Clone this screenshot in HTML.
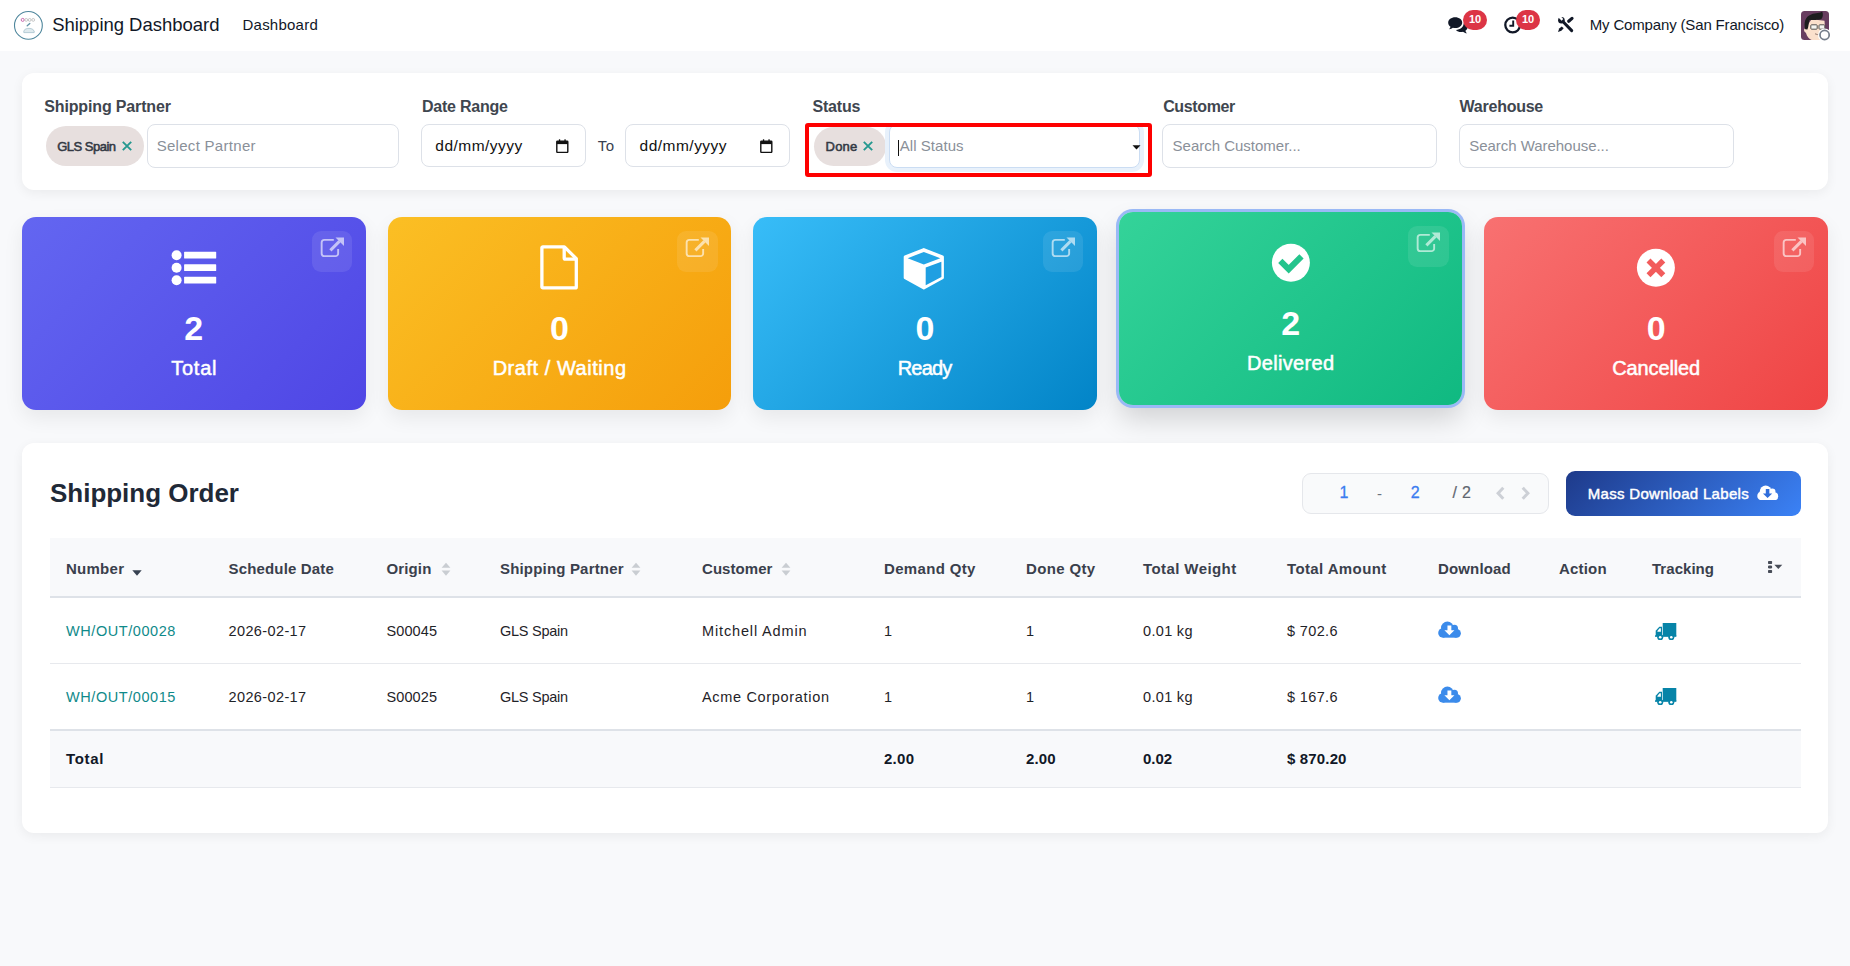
<!DOCTYPE html>
<html lang="en">
<head>
<meta charset="utf-8">
<title>Shipping Dashboard</title>
<style>
*{box-sizing:border-box;margin:0;padding:0}
html,body{width:1850px;height:966px;overflow:hidden}
body{background:#f8f9fb;font-family:"Liberation Sans",sans-serif;color:#111827;position:relative}
.t{position:absolute;white-space:nowrap;line-height:1}
.abs{position:absolute}
nav{position:absolute;left:0;top:0;width:1850px;height:51px;background:#fff}
.panel{position:absolute;background:#fff;border-radius:12px;box-shadow:0 3px 12px rgba(0,0,0,.06)}
.inp{position:absolute;background:#fff;border:1px solid #dde1e8;border-radius:8px}
.tag{position:absolute;background:#e7dfde;border-radius:20px}
.card{position:absolute;border-radius:14px;box-shadow:0 8px 20px rgba(0,0,0,.07)}
.ext{position:absolute;right:13.500px;top:14px;width:40.500px;height:40.500px;border-radius:9px;background:rgba(255,255,255,.09)}
.badge{position:absolute;background:#dc3545;border-radius:10px;color:#fff;font-weight:700;font-size:11px;line-height:19.500px;text-align:center;height:19.500px;width:24.500px}
table{position:absolute;left:50px;top:538px;width:1751px;border-collapse:separate;border-spacing:0;table-layout:fixed;font-size:15px}
th,td{text-align:left;padding:0 0 0 16px;vertical-align:middle;white-space:nowrap;position:relative}
thead th{height:60px;background:#f8f9fb;border-bottom:2px solid #dee2e8;color:#3a404c;font-weight:700;padding-top:2.500px}
tbody td{height:65.500px;border-bottom:1px solid #e7e9ed;color:#1f2328;padding-top:.8px;font-size:14.500px}
tbody tr:last-child td{height:65.500px;border-bottom:0}
tfoot td{height:59px;background:#f8f9fb;border-top:2px solid #dee2e8;border-bottom:1px solid #e7e9ed;font-weight:700;color:#111827;padding-bottom:1px}
a.lnk{color:#0f8a8a;text-decoration:none}
</style>
</head>
<body>

<nav>
<svg class="abs" style="left:13px;top:10px" width="31" height="31" viewBox="0 0 31 31">
<circle cx="15.4" cy="15.4" r="13.9" fill="#fff" stroke="#4e869c" stroke-width="1.1"/>
<circle cx="9.7" cy="9.9" r="1.5" fill="none" stroke="#c55aa6" stroke-width=".9"/>
<circle cx="13.2" cy="9.9" r="1.4" fill="none" stroke="#b9b9b9" stroke-width=".8"/>
<circle cx="16.7" cy="9.9" r="1.4" fill="none" stroke="#b9b9b9" stroke-width=".8"/>
<circle cx="20.2" cy="9.9" r="1.4" fill="none" stroke="#b9b9b9" stroke-width=".8"/>
<path d="M14.2 15.8 L16.8 13.4" stroke="#5f93a6" stroke-width="1.3" stroke-linecap="round"/>
<path d="M10.8 21 q1-2.6 4-2.6 h2.2 q3 0 4.2 2.8 v1.4 h-10.4z" fill="#dfeaee" stroke="#9dbcc8" stroke-width=".7"/>
</svg>
<span class="t" style="left:52.20px;top:16.44px;font-size:18.5px;letter-spacing:-0.024px;color:#111827;">Shipping Dashboard</span>
<span class="t" style="left:242.50px;top:17.20px;font-size:15px;letter-spacing:0.231px;color:#111827;">Dashboard</span>
<svg class="abs" style="left:1448px;top:16.5px" width="20" height="17.5" viewBox="0 0 20 17.5">
<path d="M7.2 0.3C3.3 0.3 0.2 2.7 0.2 5.7c0 1.6.9 3 2.3 4-.2 1-.8 1.9-1.6 2.5 1.6 0 3-.6 4-1.4.7.2 1.5.3 2.3.3 3.9 0 7-2.4 7-5.4S11.100 .3 7.200 .3z" fill="#111827"/>
<path d="M15.6 6.6c.1 3.600-3.500 6.200-7.600 6.300 1.100 1.300 3.100 2.100 5.100 2.100.700 0 1.300-.1 1.900-.2 1 .9 2.400 1.500 4 1.500-.8-.6-1.400-1.500-1.600-2.500 1.400-.9 2.300-2.200 2.300-3.700 0-1.500-1.600-2.900-4.100-3.500z" fill="#111827"/>
</svg>
<div class="badge" style="left:1462.8px;top:10.2px">10</div>
<svg class="abs" style="left:1504px;top:15.5px" width="18" height="18" viewBox="0 0 18 18">
<circle cx="8.700" cy="9" r="7.400" fill="none" stroke="#111827" stroke-width="2.300"/>
<path d="M9.2 4.600v5.200H5.400" fill="none" stroke="#111827" stroke-width="1.9"/>
</svg>
<div class="badge" style="left:1515.8px;top:10.2px">10</div>
<svg class="abs" style="left:1556px;top:15px" width="20" height="19" viewBox="0 0 20 19">
<g fill="#111827" stroke="#111827">
<path d="M7.600 7.200L15.700 15.600" stroke-width="3" stroke-linecap="round" fill="none"/>
<circle cx="5.400" cy="5.200" r="3.300" stroke="none"/>
<path d="M12.700 6.300L16 3.400" stroke-width="3.200" stroke-linecap="round" fill="none"/>
<path d="M2 16.900L3.200 13.600 5.800 11.400 7.700 13.200 5.400 15.800z" stroke="none"/>
</g>
<path d="M5.600 5.700L1.600 1.700 3.400 0 7.300 3.900z" fill="#fff"/>
</svg>
<span class="t" style="left:1589.70px;top:16.70px;font-size:15px;letter-spacing:-0.155px;color:#111827;">My Company (San Francisco)</span>
<svg class="abs" style="left:1801px;top:11px" width="32" height="32" viewBox="0 0 32 32">
<defs><clipPath id="av"><rect x="0" y="0" width="28" height="29" rx="3.5"/></clipPath></defs>
<g clip-path="url(#av)">
<rect width="28" height="29" fill="#683d60"/>
<path d="M4.500 17.500c-1.800-.8-2.200 3.500.4 4.200 1.400 4.800 4.200 7.600 7.600 7.600h6.500c3.200-1.600 5.200-5.600 5-11.600l-.5-8-13-1.500z" fill="#fbe0cc"/>
<path d="M4.200 18.200c-1.500-6.500-.3-12.500 6-14.800 4.500-1.600 9-1 11-2.800 1.200 2.600.8 5.800-.8 7.400-3.600 1.600-8.600.4-12 1.200-.9 2.700-.6 6.500-2 9.300z" fill="#1d1d1f"/>
<rect x="9.800" y="13.800" width="6.400" height="4.400" rx=".8" fill="#f4f4f0" stroke="#55524f" stroke-width="1"/>
<rect x="18" y="13.800" width="5.800" height="4.400" rx=".8" fill="#f4f4f0" stroke="#55524f" stroke-width="1"/>
<path d="M14 22.800q2.500 1.500 5.500.2" stroke="#8a6f66" stroke-width=".9" fill="none"/>
</g>
<circle cx="23.600" cy="24" r="6.600" fill="#fff"/>
<circle cx="23.600" cy="24" r="4.600" fill="#fff" stroke="#747d8a" stroke-width="1.700"/>
</svg>
</nav>
<section class="panel" style="left:22px;top:73px;width:1806px;height:117px"></section>
<span class="t" style="left:44.30px;top:99.16px;font-size:16px;letter-spacing:-0.152px;color:#40464f;font-weight:700;">Shipping Partner</span>
<span class="t" style="left:421.90px;top:99.16px;font-size:16px;letter-spacing:-0.211px;color:#40464f;font-weight:700;">Date Range</span>
<span class="t" style="left:812.40px;top:99.16px;font-size:16px;letter-spacing:-0.176px;color:#40464f;font-weight:700;">Status</span>
<span class="t" style="left:1163.20px;top:99.16px;font-size:16px;letter-spacing:-0.374px;color:#40464f;font-weight:700;">Customer</span>
<span class="t" style="left:1459.60px;top:99.16px;font-size:16px;letter-spacing:-0.248px;color:#40464f;font-weight:700;">Warehouse</span>
<div class="tag" style="left:46px;top:126px;width:98px;height:40px"></div>
<span class="t" style="left:57.20px;top:140.20px;font-size:13px;letter-spacing:-0.507px;color:#333944;-webkit-text-stroke:0.55px #333944;">GLS Spain</span>
<svg class="abs" style="left:122px;top:141.200px" width="10" height="10" viewBox="0 0 10 10"><path d="M.8.800l8.400 8.400M9.200.800L.8 9.200" stroke="#25988f" stroke-width="1.900" fill="none"/></svg>
<div class="inp" style="left:147px;top:124px;width:252px;height:43.500px"></div>
<span class="t" style="left:156.70px;top:137.60px;font-size:15px;letter-spacing:0.290px;color:#8a9099;">Select Partner</span>
<div class="inp" style="left:421px;top:124px;width:165px;height:43px"></div>
<span class="t" style="left:435.30px;top:137.98px;font-size:15.5px;letter-spacing:0.479px;color:#111;">dd/mm/yyyy</span>
<svg class="abs" style="left:555.8px;top:138.500px" width="13" height="14.500" viewBox="0 0 13 14.500"><rect x=".8" y="2.100" width="11" height="11.300" rx=".7" fill="#fff" stroke="#111" stroke-width="1.400"/><rect x=".8" y="2.100" width="11" height="3" fill="#111"/><rect x="2.900" y=".3" width="1.300" height="2.500" fill="#111"/><rect x="8.400" y=".3" width="1.300" height="2.500" fill="#111"/></svg>
<span class="t" style="left:597.80px;top:138.30px;font-size:15px;letter-spacing:0.375px;color:#374151;">To</span>
<div class="inp" style="left:625.300px;top:124px;width:164.700px;height:43px"></div>
<span class="t" style="left:639.60px;top:137.98px;font-size:15.5px;letter-spacing:0.479px;color:#111;">dd/mm/yyyy</span>
<svg class="abs" style="left:760.1px;top:138.500px" width="13" height="14.500" viewBox="0 0 13 14.500"><rect x=".8" y="2.100" width="11" height="11.300" rx=".7" fill="#fff" stroke="#111" stroke-width="1.400"/><rect x=".8" y="2.100" width="11" height="3" fill="#111"/><rect x="2.900" y=".3" width="1.300" height="2.500" fill="#111"/><rect x="8.400" y=".3" width="1.300" height="2.500" fill="#111"/></svg>
<div class="tag" style="left:814.200px;top:127px;width:71.600px;height:39px"></div>
<span class="t" style="left:825.60px;top:140.20px;font-size:13px;letter-spacing:0.177px;color:#333944;-webkit-text-stroke:0.55px #333944;">Done</span>
<svg class="abs" style="left:863.4px;top:141.200px" width="10" height="10" viewBox="0 0 10 10"><path d="M.8.800l8.400 8.400M9.200.800L.8 9.200" stroke="#25988f" stroke-width="1.900" fill="none"/></svg>
<div class="inp" style="left:888.800px;top:124px;width:251px;height:43.500px;border-color:#cbddf3;box-shadow:0 0 0 4px #e8f1fb;clip-path:inset(2px -5px -5px -5px)"></div>
<div class="abs" style="left:898.300px;top:139.500px;width:1.200px;height:16px;background:#111"></div>
<span class="t" style="left:899.80px;top:137.90px;font-size:15px;letter-spacing:0.047px;color:#8a9099;">All Status</span>
<svg class="abs" style="left:1132px;top:144.500px" width="9" height="5" viewBox="0 0 9 5"><path d="M.5.300h8L4.500 4.600z" fill="#111"/></svg>
<div class="abs" style="left:804.600px;top:122.800px;width:347.800px;height:54.700px;border:4.300px solid #fe0000;border-radius:3px"></div>
<div class="inp" style="left:1162.300px;top:124px;width:274.500px;height:43.600px"></div>
<span class="t" style="left:1172.60px;top:138.00px;font-size:15px;letter-spacing:-0.012px;color:#8a9099;">Search Customer...</span>
<div class="inp" style="left:1458.900px;top:124px;width:274.700px;height:43.600px"></div>
<span class="t" style="left:1469.20px;top:138.00px;font-size:15px;letter-spacing:-0.035px;color:#8a9099;">Search Warehouse...</span>
<div class="card" style="left:22px;top:217px;width:343.600px;height:192.500px;background:linear-gradient(135deg,#6366f1,#4f46e5);">
<svg class="abs" style="left:149px;top:32.500px" width="46" height="36" viewBox="0 0 46 36"><g fill="#fff"><circle cx="5.600" cy="5.200" r="5"/><circle cx="5.600" cy="17.700" r="5"/><circle cx="5.600" cy="30.200" r="5"/><rect x="13.100" y="1.800" width="32.100" height="6.800" rx=".6"/><rect x="13.100" y="14.300" width="32.100" height="6.800" rx=".6"/><rect x="13.100" y="26.800" width="32.100" height="6.800" rx=".6"/></g></svg>
<div class="ext"><svg class="abs" style="left:0;top:0" width="40" height="40" viewBox="0 0 40 40"><g stroke="#fff" stroke-opacity=".62" fill="none"><path d="M21.800 8.850H12.400a2.750 2.750 0 0 0-2.750 2.750v10.800a2.750 2.750 0 0 0 2.750 2.750h11a2.750 2.750 0 0 0 2.750-2.750V17.900" stroke-width="1.900"/><path d="M18.400 19.400L27.400 10.400" stroke-width="3"/></g><path d="M23.500 6.500h8.500v8.500z" fill="#fff" fill-opacity=".62"/></svg></div>
<span class="t" style="left:162.37px;top:94.42px;font-size:34px;letter-spacing:0.000px;color:#fff;font-weight:700;">2</span>
<span class="t" style="left:149.15px;top:140.67px;font-size:20px;letter-spacing:0.775px;color:#fff;-webkit-text-stroke:0.5px #fff;">Total</span>
</div>
<div class="card" style="left:387.6px;top:217px;width:343.600px;height:192.500px;background:linear-gradient(135deg,#fbbf24,#f59e0b);">
<svg class="abs" style="left:151.400px;top:27px" width="42" height="47" viewBox="0 0 42 47"><path d="M3.900 2.800h21.500l11.900 11.900v28.200a1 1 0 0 1-1 1H3.900a1 1 0 0 1-1-1V3.800a1 1 0 0 1 1-1z" fill="none" stroke="#fff" stroke-width="3.300" stroke-linejoin="round"/><path d="M25.200 2.800v11.200a1.200 1.200 0 0 0 1.200 1.200h10.900" fill="none" stroke="#fff" stroke-width="3.300"/></svg>
<div class="ext"><svg class="abs" style="left:0;top:0" width="40" height="40" viewBox="0 0 40 40"><g stroke="#fff" stroke-opacity=".62" fill="none"><path d="M21.800 8.850H12.400a2.750 2.750 0 0 0-2.750 2.750v10.800a2.750 2.750 0 0 0 2.750 2.750h11a2.750 2.750 0 0 0 2.750-2.750V17.900" stroke-width="1.900"/><path d="M18.400 19.400L27.400 10.400" stroke-width="3"/></g><path d="M23.500 6.500h8.500v8.500z" fill="#fff" fill-opacity=".62"/></svg></div>
<span class="t" style="left:162.37px;top:94.42px;font-size:34px;letter-spacing:0.000px;color:#fff;font-weight:700;">0</span>
<span class="t" style="left:105.05px;top:140.67px;font-size:20px;letter-spacing:0.536px;color:#fff;-webkit-text-stroke:0.5px #fff;">Draft / Waiting</span>
</div>
<div class="card" style="left:753.2px;top:217px;width:343.600px;height:192.500px;background:linear-gradient(135deg,#38bdf8,#0284c7);">
<svg class="abs" style="left:149px;top:30px" width="44" height="44" viewBox="0 0 44 44"><path d="M21.800 2.600L40.400 10v20.800L21.800 41 3.200 30.800V10z" fill="#fff" stroke="#fff" stroke-width="3" stroke-linejoin="round"/><path d="M21.800 4.900l16.500 6.300-16.500 6.200L5.700 11.200z" fill="#24a5e6"/><path d="M23.700 20.500l15.700-5.800v15.200L23.700 38.300z" fill="#1f9fe2"/></svg>
<div class="ext"><svg class="abs" style="left:0;top:0" width="40" height="40" viewBox="0 0 40 40"><g stroke="#fff" stroke-opacity=".62" fill="none"><path d="M21.800 8.850H12.400a2.750 2.750 0 0 0-2.750 2.750v10.800a2.750 2.750 0 0 0 2.750 2.750h11a2.750 2.750 0 0 0 2.750-2.750V17.900" stroke-width="1.900"/><path d="M18.400 19.400L27.400 10.400" stroke-width="3"/></g><path d="M23.500 6.500h8.500v8.500z" fill="#fff" fill-opacity=".62"/></svg></div>
<span class="t" style="left:162.37px;top:94.42px;font-size:34px;letter-spacing:0.000px;color:#fff;font-weight:700;">0</span>
<span class="t" style="left:144.50px;top:140.67px;font-size:20px;letter-spacing:-0.800px;color:#fff;-webkit-text-stroke:0.5px #fff;">Ready</span>
</div>
<div class="card" style="left:1118.8px;top:212px;width:343.600px;height:192.500px;background:linear-gradient(135deg,#34d399,#10b981);box-shadow:0 0 0 3px #9ab9f6,0 14px 28px rgba(0,0,0,.16);">
<svg class="abs" style="left:152px;top:30.500px" width="40" height="40" viewBox="0 0 40 40"><circle cx="19.900" cy="19.800" r="19" fill="#fff"/><path d="M9.300 17.800L17.700 26.200 30.500 13.400" fill="none" stroke="#24c48c" stroke-width="6"/></svg>
<div class="ext"><svg class="abs" style="left:0;top:0" width="40" height="40" viewBox="0 0 40 40"><g stroke="#fff" stroke-opacity=".62" fill="none"><path d="M21.800 8.850H12.400a2.750 2.750 0 0 0-2.750 2.750v10.800a2.750 2.750 0 0 0 2.750 2.750h11a2.750 2.750 0 0 0 2.750-2.750V17.900" stroke-width="1.900"/><path d="M18.400 19.400L27.400 10.400" stroke-width="3"/></g><path d="M23.500 6.500h8.500v8.500z" fill="#fff" fill-opacity=".62"/></svg></div>
<span class="t" style="left:162.37px;top:94.42px;font-size:34px;letter-spacing:0.000px;color:#fff;font-weight:700;">2</span>
<span class="t" style="left:128.30px;top:140.67px;font-size:20px;letter-spacing:0.312px;color:#fff;-webkit-text-stroke:0.5px #fff;">Delivered</span>
</div>
<div class="card" style="left:1484.4px;top:217px;width:343.600px;height:192.500px;background:linear-gradient(135deg,#f87171,#ef4444);">
<svg class="abs" style="left:152px;top:30.500px" width="40" height="40" viewBox="0 0 40 40"><circle cx="19.900" cy="19.800" r="19" fill="#fff"/><path d="M12.500 12.400l14.800 14.800M27.300 12.400L12.500 27.200" fill="none" stroke="#f25c5c" stroke-width="5.600"/></svg>
<div class="ext"><svg class="abs" style="left:0;top:0" width="40" height="40" viewBox="0 0 40 40"><g stroke="#fff" stroke-opacity=".62" fill="none"><path d="M21.800 8.850H12.400a2.750 2.750 0 0 0-2.750 2.750v10.800a2.750 2.750 0 0 0 2.750 2.750h11a2.750 2.750 0 0 0 2.750-2.750V17.900" stroke-width="1.900"/><path d="M18.400 19.400L27.400 10.400" stroke-width="3"/></g><path d="M23.500 6.500h8.500v8.500z" fill="#fff" fill-opacity=".62"/></svg></div>
<span class="t" style="left:162.37px;top:94.42px;font-size:34px;letter-spacing:0.000px;color:#fff;font-weight:700;">0</span>
<span class="t" style="left:127.80px;top:140.67px;font-size:20px;letter-spacing:-0.113px;color:#fff;-webkit-text-stroke:0.5px #fff;">Cancelled</span>
</div>
<section class="panel" style="left:22px;top:443px;width:1806px;height:390px"></section>
<span class="t" style="left:50.00px;top:480.49px;font-size:26px;letter-spacing:-0.022px;color:#1f2937;font-weight:700;">Shipping Order</span>
<div class="abs" style="left:1302px;top:473px;width:246.500px;height:41px;background:#f9fafb;border:1px solid #e5e7eb;border-radius:9px"></div>
<span class="t" style="left:1339.60px;top:485.26px;font-size:16px;letter-spacing:0.000px;color:#3b7cf0;-webkit-text-stroke:0.3px #3b7cf0;">1</span>
<span class="t" style="left:1377.00px;top:486.10px;font-size:15px;letter-spacing:0.000px;color:#6b7280;">-</span>
<span class="t" style="left:1410.80px;top:485.26px;font-size:16px;letter-spacing:0.000px;color:#3b7cf0;-webkit-text-stroke:0.3px #3b7cf0;">2</span>
<span class="t" style="left:1452.60px;top:485.26px;font-size:16px;letter-spacing:0.320px;color:#5f6670;-webkit-text-stroke:0.2px #5f6670;">/ 2</span>
<svg class="abs" style="left:1495px;top:486px" width="12" height="15" viewBox="0 0 12 15"><path d="M8.300 1.700L3.100 7.200l5.200 5.500" fill="none" stroke="#cdd0d6" stroke-width="3"/></svg>
<svg class="abs" style="left:1519.500px;top:486px" width="12" height="15" viewBox="0 0 12 15"><path d="M2.700 1.700l5.200 5.500-5.200 5.500" fill="none" stroke="#cdd0d6" stroke-width="3"/></svg>
<div class="abs" style="left:1566px;top:471px;width:235px;height:44.500px;border-radius:9px;background:linear-gradient(135deg,#1e3a8a,#3b82f6)"></div>
<span class="t" style="left:1587.70px;top:485.60px;font-size:15px;letter-spacing:0.311px;color:#fff;-webkit-text-stroke:0.45px #fff;">Mass Download Labels</span>
<svg class="abs" style="left:1757.4px;top:484.7px" width="21.5" height="15.6" viewBox="0 0 24 17.500"><g fill="#fff"><circle cx="9.700" cy="7.100" r="6.600"/><circle cx="5.100" cy="12.300" r="4.900"/><circle cx="19.200" cy="12.700" r="4.500"/><circle cx="17" cy="7.500" r="3.700"/><rect x="5.100" y="9" width="14.100" height="8.200"/></g><path d="M9.800 4.600h4v4.800h3.200l-5.200 5.300-5.200-5.300h3.200z" fill="#2f6ddb"/></svg>
<table><colgroup><col style="width:162.5px"><col style="width:158px"><col style="width:113.5px"><col style="width:202px"><col style="width:182px"><col style="width:142px"><col style="width:117px"><col style="width:144px"><col style="width:151px"><col style="width:121px"><col style="width:93px"><col style="width:116px"><col style="width:49px"></colgroup>
<thead><tr>
<th><span style="letter-spacing:0.260px">Number</span><svg style="position:absolute;left:81.800px;top:31.500px" width="10" height="6" viewBox="0 0 10 6"><path d="M.3.300h9.400L5 5.700z" fill="#374151"/></svg></th>
<th><span style="letter-spacing:0.163px">Schedule Date</span></th>
<th><span style="letter-spacing:0.125px">Origin</span><svg style="position:absolute;left:70px;top:23.900px" width="10" height="14.300" viewBox="0 0 10 13" preserveAspectRatio="none"><path d="M.6 5.300L5 .6l4.400 4.700zM.6 7.700L5 12.400l4.400-4.700z" fill="#c9cdd2"/></svg></th>
<th><span style="letter-spacing:0.178px">Shipping Partner</span><svg style="position:absolute;left:147.2px;top:23.900px" width="10" height="14.300" viewBox="0 0 10 13" preserveAspectRatio="none"><path d="M.6 5.300L5 .6l4.400 4.700zM.6 7.700L5 12.400l4.400-4.700z" fill="#c9cdd2"/></svg></th>
<th><span style="letter-spacing:0.050px">Customer</span><svg style="position:absolute;left:94.6px;top:23.900px" width="10" height="14.300" viewBox="0 0 10 13" preserveAspectRatio="none"><path d="M.6 5.300L5 .6l4.400 4.700zM.6 7.700L5 12.400l4.400-4.700z" fill="#c9cdd2"/></svg></th>
<th><span style="letter-spacing:0.328px">Demand Qty</span></th>
<th><span style="letter-spacing:0.361px">Done Qty</span></th>
<th><span style="letter-spacing:0.411px">Total Weight</span></th>
<th><span style="letter-spacing:0.386px">Total Amount</span></th>
<th><span style="letter-spacing:0.154px">Download</span></th>
<th><span style="letter-spacing:0.190px">Action</span></th>
<th><span style="letter-spacing:0.039px">Tracking</span></th>
<th><svg style="position:absolute;left:15.200px;top:23px" width="17" height="13" viewBox="0 0 17 13"><g fill="#484d58"><rect x="1" y="0" width="4.100" height="3" rx=".7"/><rect x="1" y="4.400" width="4.100" height="3.100" rx="1.200"/><rect x="1" y="9" width="4.100" height="3" rx=".7"/><path d="M7.300 3.800h8l-4 4.100z"/></g></svg></th>
</tr></thead><tbody>
<tr>
<td><a class="lnk" style="letter-spacing:0.567px">WH/OUT/00028</a></td>
<td><span style="letter-spacing:0.381px">2026-02-17</span></td>
<td><span style="letter-spacing:0.095px">S00045</span></td>
<td><span style="letter-spacing:-0.263px">GLS Spain</span></td>
<td><span style="letter-spacing:0.850px">Mitchell Admin</span></td>
<td>1</td><td>1</td>
<td><span style="letter-spacing:0.323px">0.01 kg</span></td>
<td><span style="letter-spacing:0.357px">$ 702.6</span></td>
<td><svg class="abs" style="left:15.7px;top:23.3px" width="23.2" height="17" viewBox="0 0 24 17.500"><g fill="#3b8beb"><circle cx="9.700" cy="7.100" r="6.600"/><circle cx="5.100" cy="12.300" r="4.900"/><circle cx="19.200" cy="12.700" r="4.500"/><circle cx="17" cy="7.500" r="3.700"/><rect x="5.100" y="9" width="14.100" height="8.200"/></g><path d="M9.800 4.600h4v4.800h3.200l-5.200 5.300-5.200-5.300h3.200z" fill="#fff"/></svg></td><td></td>
<td><svg style="position:absolute;left:19px;top:24.7px" width="22" height="17.500" viewBox="0 0 22 17.500"><g fill="#0784a8"><path d="M7.700 0h13.600v13.200H7.700z"/><path d="M7 3.700H4.300L.7 7.800v5.400H7z"/><path d="M0 12.300h21.300v1.500H0z"/><circle cx="5.200" cy="14.300" r="3"/><circle cx="16.300" cy="14.300" r="3"/></g><path d="M5.900 5.300H4.600L2.400 7.900v.8h3.500z" fill="#fff"/><circle cx="5.200" cy="14.300" r="1.300" fill="#fff"/><circle cx="16.300" cy="14.300" r="1.300" fill="#fff"/></svg></td><td></td>
</tr>
<tr>
<td><a class="lnk" style="letter-spacing:0.567px">WH/OUT/00015</a></td>
<td><span style="letter-spacing:0.381px">2026-02-17</span></td>
<td><span style="letter-spacing:0.095px">S00025</span></td>
<td><span style="letter-spacing:-0.263px">GLS Spain</span></td>
<td><span style="letter-spacing:0.675px">Acme Corporation</span></td>
<td>1</td><td>1</td>
<td><span style="letter-spacing:0.323px">0.01 kg</span></td>
<td><span style="letter-spacing:0.357px">$ 167.6</span></td>
<td><svg class="abs" style="left:15.7px;top:22.7px" width="23.2" height="17" viewBox="0 0 24 17.500"><g fill="#3b8beb"><circle cx="9.700" cy="7.100" r="6.600"/><circle cx="5.100" cy="12.300" r="4.900"/><circle cx="19.200" cy="12.700" r="4.500"/><circle cx="17" cy="7.500" r="3.700"/><rect x="5.100" y="9" width="14.100" height="8.200"/></g><path d="M9.800 4.600h4v4.800h3.200l-5.200 5.300-5.200-5.300h3.200z" fill="#fff"/></svg></td><td></td>
<td><svg style="position:absolute;left:19px;top:24.3px" width="22" height="17.500" viewBox="0 0 22 17.500"><g fill="#0784a8"><path d="M7.700 0h13.600v13.200H7.700z"/><path d="M7 3.700H4.300L.7 7.800v5.400H7z"/><path d="M0 12.300h21.300v1.500H0z"/><circle cx="5.200" cy="14.300" r="3"/><circle cx="16.300" cy="14.300" r="3"/></g><path d="M5.900 5.300H4.600L2.400 7.900v.8h3.500z" fill="#fff"/><circle cx="5.200" cy="14.300" r="1.300" fill="#fff"/><circle cx="16.300" cy="14.300" r="1.300" fill="#fff"/></svg></td><td></td>
</tr>
</tbody><tfoot><tr>
<td><span style="letter-spacing:0.694px">Total</span></td><td></td><td></td><td></td><td></td>
<td><span style="letter-spacing:0.275px">2.00</span></td><td><span style="letter-spacing:0.108px">2.00</span></td>
<td><span style="letter-spacing:-0.058px">0.02</span></td><td><span style="letter-spacing:0.154px">$ 870.20</span></td>
<td></td><td></td><td></td><td></td></tr></tfoot></table>
</body></html>
